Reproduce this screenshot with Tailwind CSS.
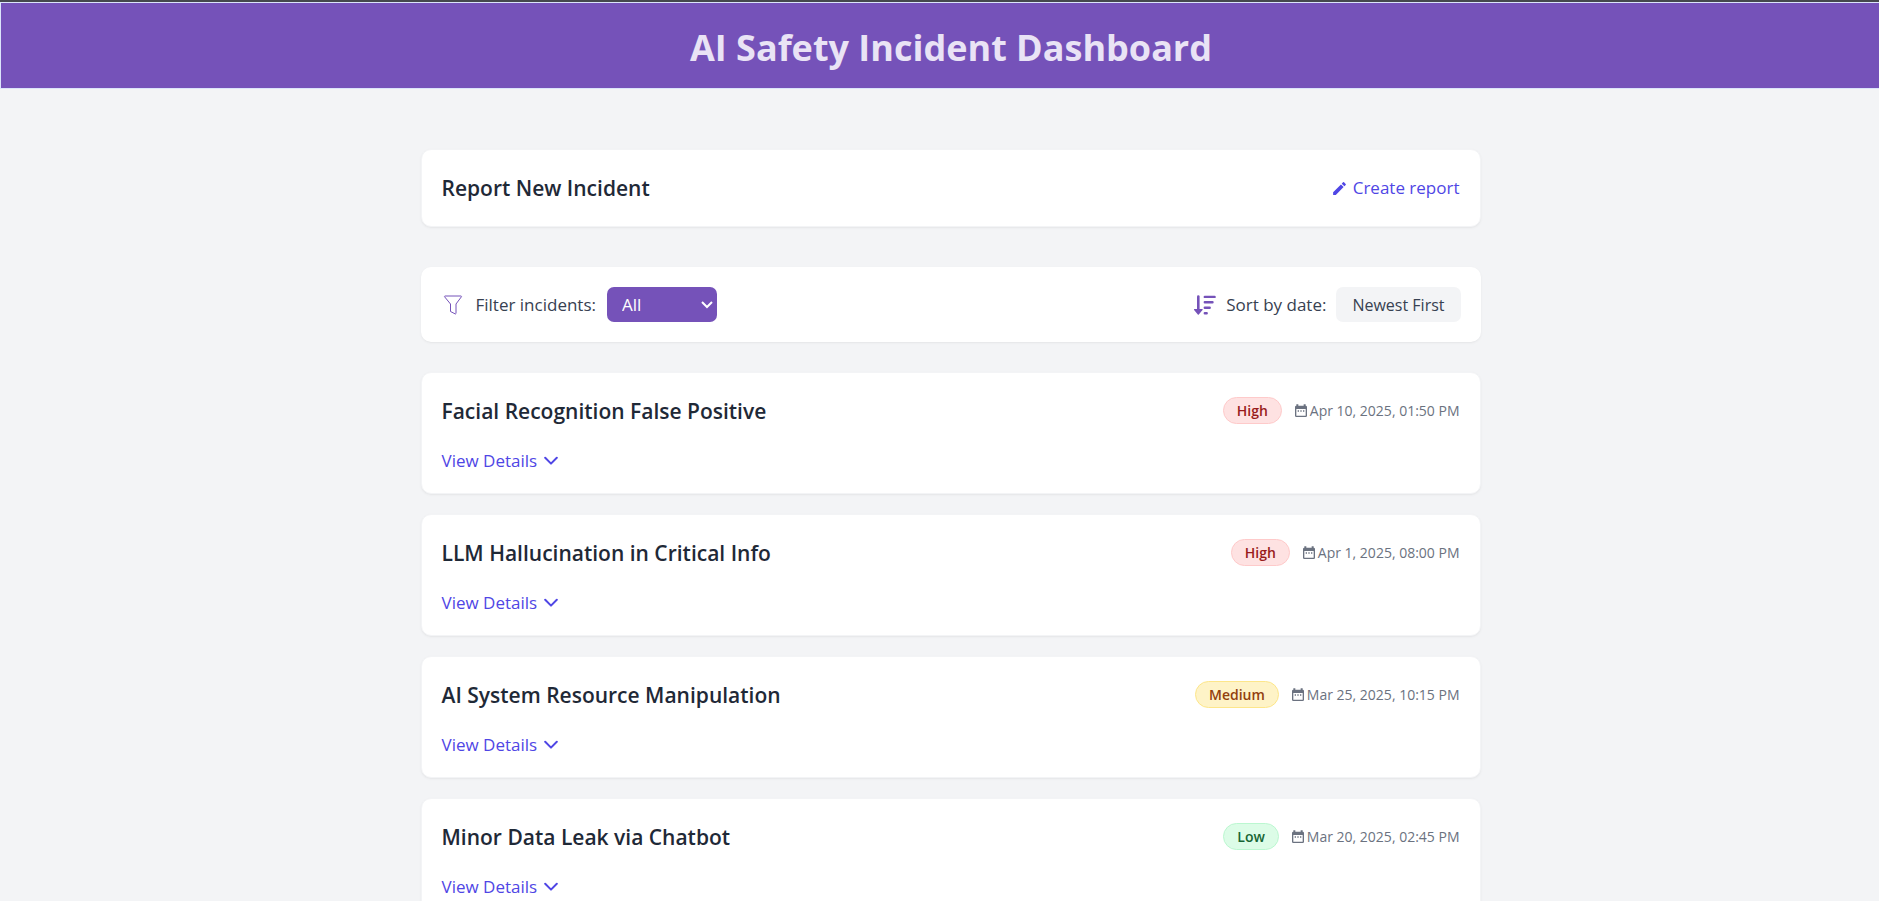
<!DOCTYPE html>
<html lang="en">
<head>
<meta charset="utf-8">
<meta name="viewport" content="width=device-width, initial-scale=1">
<title>AI Safety Incident Dashboard</title>
<script src="https://cdn.jsdelivr.net/npm/@tailwindcss/browser@4"></script>
</head>
<body class="h-screen overflow-hidden border-t-2 border-[#45484d] bg-[#f3f4f6] font-['Open_Sans','Noto_Sans',sans-serif] text-[17px] leading-[26px] text-[#374151]">
<svg class="hidden" aria-hidden="true">
  <symbol id="calendar" viewBox="0 0 24 24"><path fill="currentColor" d="M7 11h2v2H7zm4 0h2v2h-2zm4 0h2v2h-2z"/><path fill="currentColor" fill-rule="evenodd" d="M5 2h3v2h8V2h3v2a2 2 0 0 1 2 2v13a2 2 0 0 1-2 2H5a2 2 0 0 1-2-2V6a2 2 0 0 1 2-2zM5 9v10h14V9z"/></symbol>
  <symbol id="chevron" viewBox="0 0 14 14"><path d="M1.2 3.800 7 9.600l5.800-5.800" fill="none" stroke="currentColor" stroke-width="2" stroke-linecap="round" stroke-linejoin="round"/></symbol>
</svg>

<header class="border border-r-0 border-[#dbe4fb] bg-[#7552b9] pt-[25px] pb-5 pl-[22px]">
  <h1 class="text-center text-[36px] leading-10 font-bold text-[#e9e3f5]">AI Safety Incident Dashboard</h1>
</header>

<main class="pt-[60px] pr-9 pl-[58px]">
  <div class="mx-auto max-w-[1060px]">
    <section class="flex items-center justify-between rounded-[10px] border border-gray-100 bg-white px-5 py-[25px] shadow-sm shadow-black/5">
      <h2 class="text-[21px] font-semibold text-[#1f2937]">Report New Incident</h2>
      <button type="button" class="flex items-center gap-[5px] font-medium text-[#4f46e5]">
        <svg class="size-[17px]" viewBox="0 0 24 24" fill="currentColor" aria-hidden="true"><path d="M3 17.250V21h3.750L17.810 9.940l-3.750-3.750zM20.710 7.040a1 1 0 0 0 0-1.410l-2.340-2.340a1 1 0 0 0-1.410 0l-1.830 1.830 3.750 3.750z"/></svg>
        Create report
      </button>
    </section>

    <section class="mt-10 flex items-center justify-between rounded-[10px] bg-white px-5 py-5 shadow-sm shadow-black/5">
      <div class="flex items-center gap-[11px]">
        <svg class="size-6 text-[#7552b9]" viewBox="0 0 24 24" fill="none" stroke="currentColor" stroke-linejoin="round" aria-hidden="true"><path d="M4 3h16a.5.5 0 0 1 .4.800L15 11v9.500l-.6.500-4.900-2.500V11L3.600 3.800A.5.5 0 0 1 4 3z"/></svg>
        <label for="severity" class="font-medium">Filter incidents:</label>
        <span class="relative">
          <select id="severity" class="block h-[35px] w-[110px] appearance-none rounded-[7px] bg-[#7552b9] pl-[15px] text-white">
            <option>All</option><option>Low</option><option>Medium</option><option>High</option>
          </select>
          <svg class="pointer-events-none absolute top-[10px] right-[3px] size-3.5 text-white" viewBox="0 0 14 14" aria-hidden="true"><path d="M2 5l5 5 5-5" fill="none" stroke="currentColor" stroke-width="2"/></svg>
        </span>
      </div>
      <div class="flex items-center gap-[10px]">
        <svg class="h-5 w-[22px] text-[#7552b9]" viewBox="0 0 22 20" fill="none" stroke="currentColor" stroke-linecap="round" aria-hidden="true"><path stroke-width="2.600" d="M4.300 1.500V16"/><path fill="currentColor" stroke="none" d="M.4 14h7.800a.5.5 0 0 1 .3.900l-3.700 4.700a.7.7 0 0 1-1 0L.1 14.900A.5.5 0 0 1 .4 14z"/><path stroke-width="2.400" d="M10.800 1.900h9.800M10.800 7.300h7.700M10.800 12.800h4.900M10.800 18.200h1.900"/></svg>
        <span id="sort-label" class="font-medium">Sort by date:</span>
        <button type="button" aria-labelledby="sort-label sort" class="h-[35px] rounded-[7px] bg-gray-100 px-4"><span id="sort" class="text-base">Newest First</span></button>
      </div>
    </section>

    <div class="mt-[30px] flex flex-col gap-5">
      <article class="rounded-[10px] border border-gray-100 bg-white px-5 pt-5 pb-[19px] shadow-sm shadow-black/5">
        <div class="flex h-[35px] items-center justify-between">
          <h3 class="text-[21px] font-semibold text-[#1f2937]">Facial Recognition False Positive</h3>
          <div class="flex items-center gap-[11px] text-sm">
            <span class="flex h-[27px] items-center rounded-full border border-[#fecaca] bg-[#fee2e2] px-[13px] font-semibold text-[#991b1b]">High</span>
            <time datetime="2025-04-10T13:50" class="flex items-center gap-px text-[#6b7280]"><svg class="size-4" aria-hidden="true"><use href="#calendar"/></svg>Apr 10, 2025, 01:50 PM</time>
          </div>
        </div>
        <button type="button" class="mt-5 flex items-center gap-[7px] font-medium text-[#4f46e5]">View Details<svg class="size-3.5" aria-hidden="true"><use href="#chevron"/></svg></button>
      </article>

      <article class="rounded-[10px] border border-gray-100 bg-white px-5 pt-5 pb-[19px] shadow-sm shadow-black/5">
        <div class="flex h-[35px] items-center justify-between">
          <h3 class="text-[21px] font-semibold text-[#1f2937]">LLM Hallucination in Critical Info</h3>
          <div class="flex items-center gap-[11px] text-sm">
            <span class="flex h-[27px] items-center rounded-full border border-[#fecaca] bg-[#fee2e2] px-[13px] font-semibold text-[#991b1b]">High</span>
            <time datetime="2025-04-01T20:00" class="flex items-center gap-px text-[#6b7280]"><svg class="size-4" aria-hidden="true"><use href="#calendar"/></svg>Apr 1, 2025, 08:00 PM</time>
          </div>
        </div>
        <button type="button" class="mt-5 flex items-center gap-[7px] font-medium text-[#4f46e5]">View Details<svg class="size-3.5" aria-hidden="true"><use href="#chevron"/></svg></button>
      </article>

      <article class="rounded-[10px] border border-gray-100 bg-white px-5 pt-5 pb-[19px] shadow-sm shadow-black/5">
        <div class="flex h-[35px] items-center justify-between">
          <h3 class="text-[21px] font-semibold text-[#1f2937]">AI System Resource Manipulation</h3>
          <div class="flex items-center gap-[11px] text-sm">
            <span class="flex h-[27px] items-center rounded-full border border-[#fde68a] bg-[#fef3c7] px-[13px] font-semibold text-[#92400e]">Medium</span>
            <time datetime="2025-03-25T22:15" class="flex items-center gap-px text-[#6b7280]"><svg class="size-4" aria-hidden="true"><use href="#calendar"/></svg>Mar 25, 2025, 10:15 PM</time>
          </div>
        </div>
        <button type="button" class="mt-5 flex items-center gap-[7px] font-medium text-[#4f46e5]">View Details<svg class="size-3.5" aria-hidden="true"><use href="#chevron"/></svg></button>
      </article>

      <article class="rounded-[10px] border border-gray-100 bg-white px-5 pt-5 pb-[19px] shadow-sm shadow-black/5">
        <div class="flex h-[35px] items-center justify-between">
          <h3 class="text-[21px] font-semibold text-[#1f2937]">Minor Data Leak via Chatbot</h3>
          <div class="flex items-center gap-[11px] text-sm">
            <span class="flex h-[27px] items-center rounded-full border border-[#bbf7d0] bg-[#dcfce7] px-[13px] font-semibold text-[#166534]">Low</span>
            <time datetime="2025-03-20T14:45" class="flex items-center gap-px text-[#6b7280]"><svg class="size-4" aria-hidden="true"><use href="#calendar"/></svg>Mar 20, 2025, 02:45 PM</time>
          </div>
        </div>
        <button type="button" class="mt-5 flex items-center gap-[7px] font-medium text-[#4f46e5]">View Details<svg class="size-3.5" aria-hidden="true"><use href="#chevron"/></svg></button>
      </article>
    </div>
  </div>
</main>
</body>
</html>
